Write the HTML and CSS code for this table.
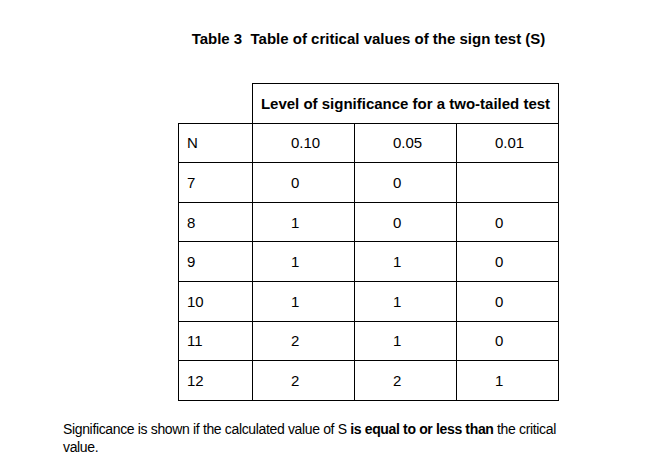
FILE: index.html
```html
<!DOCTYPE html>
<html>
<head>
<meta charset="utf-8">
<link rel="stylesheet" href="styles.css">
</head>
<body>
<div class="page">
  <div class="table-block">
    <h1 class="title">Table 3&nbsp; Table of critical values of the sign test (S)</h1>
    <table class="crit">
      <colgroup>
        <col class="c-n">
        <col class="c-v">
        <col class="c-v">
        <col class="c-v">
      </colgroup>
      <tr class="row">
        <td class="blank"></td>
        <th class="level" colspan="3">Level of significance for a two-tailed test</th>
      </tr>
      <tr class="row">
        <td class="n">N</td>
        <td class="v">0.10</td>
        <td class="v">0.05</td>
        <td class="v">0.01</td>
      </tr>
      <tr class="row"><td class="n">7</td><td class="v">0</td><td class="v">0</td><td class="v"></td></tr>
      <tr class="row"><td class="n">8</td><td class="v">1</td><td class="v">0</td><td class="v">0</td></tr>
      <tr class="row"><td class="n">9</td><td class="v">1</td><td class="v">1</td><td class="v">0</td></tr>
      <tr class="row"><td class="n">10</td><td class="v">1</td><td class="v">1</td><td class="v">0</td></tr>
      <tr class="row"><td class="n">11</td><td class="v">2</td><td class="v">1</td><td class="v">0</td></tr>
      <tr class="row"><td class="n">12</td><td class="v">2</td><td class="v">2</td><td class="v">1</td></tr>
    </table>
  </div>
  <p class="note">Significance is shown if the calculated value of S <b>is equal to or less than</b> the critical value.</p>
</div>
</body>
</html>
```
FILE: styles.css
```css
html, body {
  margin: 0;
  padding: 0;
  background: #ffffff;
}
body {
  font-family: "Liberation Sans", Arial, sans-serif;
  font-size: 15px;
  color: #000000;
}
.page {
  padding: 30px 0 0 63px;
}
.table-block {
  margin-left: 115px;
  width: 381px;
}
.title {
  margin: 0;
  font-size: 15px;
  line-height: 17px;
  font-weight: bold;
  text-align: center;
  white-space: nowrap;
}
.crit {
  margin-top: 36px;
  border-collapse: collapse;
  table-layout: fixed;
  width: 381px;
}
.c-n { width: 74px; }
.c-v { width: 102px; }
.row { height: 39.6px; }
.crit td, .crit th {
  border: 1px solid #000;
  padding: 0;
  vertical-align: middle;
  line-height: 17px;
}
.crit td.blank {
  border-top: none;
  border-left: none;
}
.level {
  font-weight: bold;
  text-align: center;
  white-space: nowrap;
}
.n {
  padding-left: 8px !important;
  text-align: left;
}
.v {
  padding-left: 38px !important;
  text-align: left;
}
.note {
  margin: 19px 0 0 0;
  width: 510px;
  font-size: 14px;
  letter-spacing: -0.35px;
  line-height: 18px;
}
```
